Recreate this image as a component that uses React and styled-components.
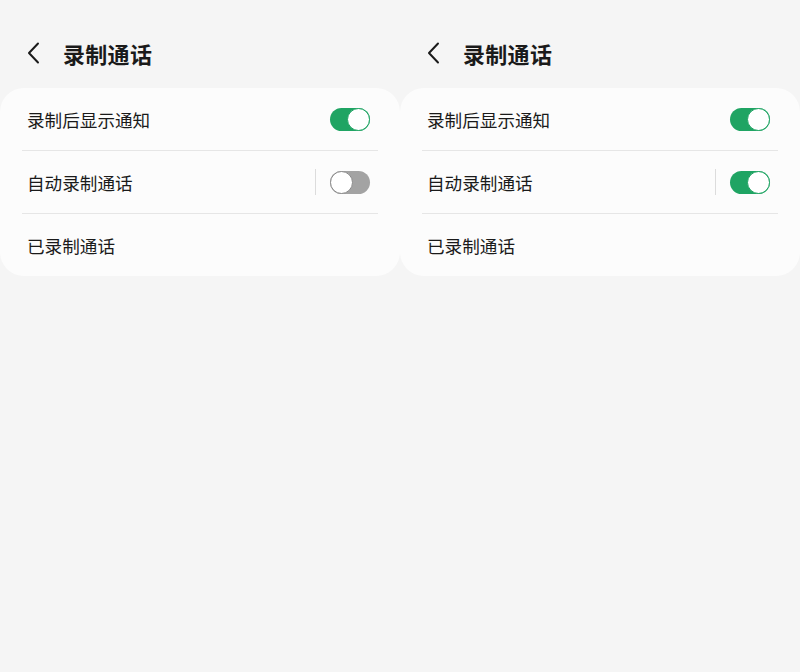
import styled, { createGlobalStyle } from 'styled-components'

const GlobalStyle = createGlobalStyle`
    body {
        margin: 0;
        background: #f5f5f5;
        font-family: 'Noto Sans CJK SC', 'Noto Sans', sans-serif;
    }
`

function Chevron(){
    return(
        <svg width="14" height="22" viewBox="0 0 14 22">
            <path d="M11 1.5 L2 11 L11 20.5" fill="none" stroke="#1a1a1a" strokeWidth="2" strokeLinecap="round" strokeLinejoin="round"/>
        </svg>
    )
}

function Panel({autoOn}){
    return(
        <Column>
            <Header>
                <Back><Chevron/></Back>
                <Title>录制通话</Title>
            </Header>
            <Card>
                <Row>
                    <Label>录制后显示通知</Label>
                    <Toggle on={true}/>
                </Row>
                <Row>
                    <Label>自动录制通话</Label>
                    <Controls>
                        <VLine/>
                        <Toggle on={autoOn}/>
                    </Controls>
                </Row>
                <Row last>
                    <Label>已录制通话</Label>
                </Row>
            </Card>
        </Column>
    )
}

export default function App(){
    return(
        <Page>
            <GlobalStyle/>
            <Panel autoOn={false}/>
            <Panel autoOn={true}/>
        </Page>
    )
}

const Page = styled.div`
    display: grid;
    grid-template-columns: 400px 400px;
    width: 800px;
    height: 672px;
    background: #f5f5f5;
`
const Column = styled.div`
    display: flex;
    flex-direction: column;
`
const Header = styled.div`
    display: flex;
    align-items: center;
    height: 88px;
    padding-left: 27px;
    box-sizing: border-box;
    padding-top: 18px;
`
const Back = styled.div`
    display: flex;
    align-items: center;
    width: 36px;
`
const Title = styled.h1`
    margin: 0;
    font-size: 22px;
    font-weight: 700;
    color: #1a1a1a;
    letter-spacing: 0.3px;
`
const Card = styled.div`
    background: #fcfcfc;
    border-radius: 24px;
    padding: 0 22px;
`
const Row = styled.div`
    display: flex;
    align-items: center;
    justify-content: space-between;
    height: 62px;
    padding: 0 8px 0 5px;
    border-bottom: ${props => props.last ? 'none' : '1px solid #e6e6e6'};
`
const Label = styled.span`
    font-size: 17.6px;
    color: #1a1a1a;
`
const Controls = styled.div`
    display: flex;
    align-items: center;
    gap: 14px;
`
const VLine = styled.div`
    width: 1px;
    height: 26px;
    background: #dcdcdc;
`
const Toggle = styled.div`
    position: relative;
    width: 40px;
    height: 23px;
    border-radius: 12px;
    background: ${props => props.on ? '#1fa463' : '#a3a3a3'};

    &::after {
        content: '';
        position: absolute;
        top: 0;
        left: ${props => props.on ? '17px' : '0'};
        width: 23px;
        height: 23px;
        box-sizing: border-box;
        border-radius: 50%;
        background: #ffffff;
        border: 1.5px solid ${props => props.on ? '#1fa463' : '#8a8a8a'};
    }
`
